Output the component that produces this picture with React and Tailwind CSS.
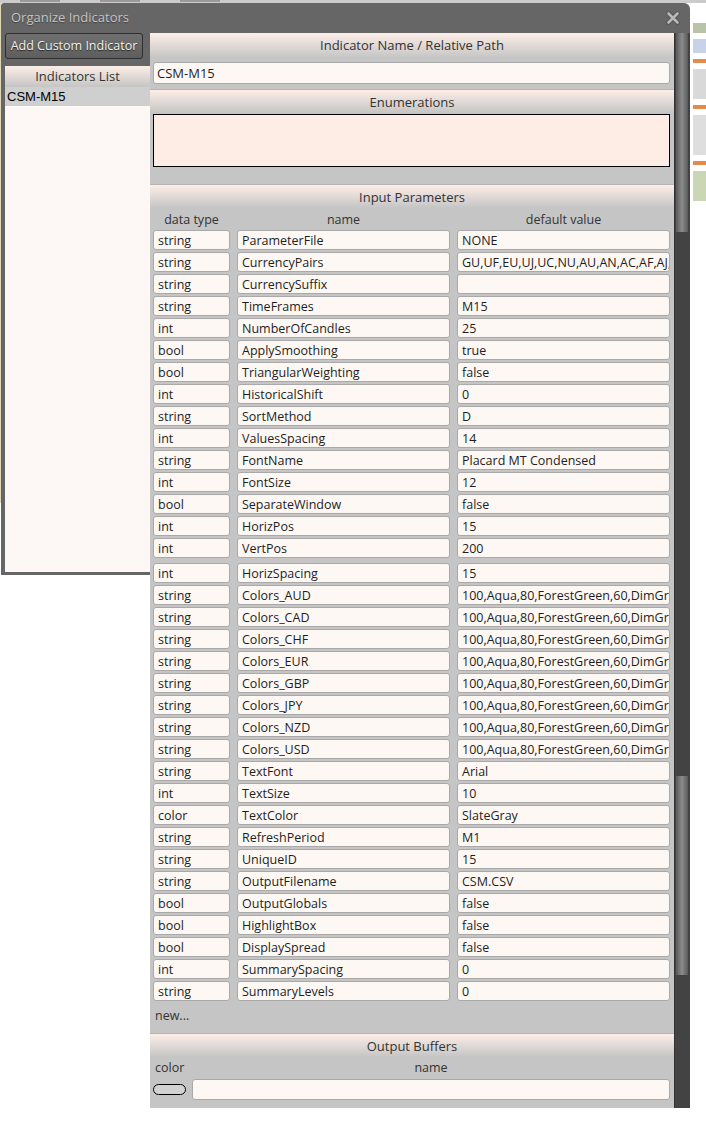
import React from "react";

const params = [
  ["string", "ParameterFile", "NONE"],
  ["string", "CurrencyPairs", "GU,UF,EU,UJ,UC,NU,AU,AN,AC,AF,AJ,NC,NF,NJ,CF,CJ,FJ,EG,EA,EN"],
  ["string", "CurrencySuffix", ""],
  ["string", "TimeFrames", "M15"],
  ["int", "NumberOfCandles", "25"],
  ["bool", "ApplySmoothing", "true"],
  ["bool", "TriangularWeighting", "false"],
  ["int", "HistoricalShift", "0"],
  ["string", "SortMethod", "D"],
  ["int", "ValuesSpacing", "14"],
  ["string", "FontName", "Placard MT Condensed"],
  ["int", "FontSize", "12"],
  ["bool", "SeparateWindow", "false"],
  ["int", "HorizPos", "15"],
  ["int", "VertPos", "200"],
  ["int", "HorizSpacing", "15"],
  ["string", "Colors_AUD", "100,Aqua,80,ForestGreen,60,DimGray,40,Orange,20,Red"],
  ["string", "Colors_CAD", "100,Aqua,80,ForestGreen,60,DimGray,40,Orange,20,Red"],
  ["string", "Colors_CHF", "100,Aqua,80,ForestGreen,60,DimGray,40,Orange,20,Red"],
  ["string", "Colors_EUR", "100,Aqua,80,ForestGreen,60,DimGray,40,Orange,20,Red"],
  ["string", "Colors_GBP", "100,Aqua,80,ForestGreen,60,DimGray,40,Orange,20,Red"],
  ["string", "Colors_JPY", "100,Aqua,80,ForestGreen,60,DimGray,40,Orange,20,Red"],
  ["string", "Colors_NZD", "100,Aqua,80,ForestGreen,60,DimGray,40,Orange,20,Red"],
  ["string", "Colors_USD", "100,Aqua,80,ForestGreen,60,DimGray,40,Orange,20,Red"],
  ["string", "TextFont", "Arial"],
  ["int", "TextSize", "10"],
  ["color", "TextColor", "SlateGray"],
  ["string", "RefreshPeriod", "M1"],
  ["string", "UniqueID", "15"],
  ["string", "OutputFilename", "CSM.CSV"],
  ["bool", "OutputGlobals", "false"],
  ["bool", "HighlightBox", "false"],
  ["bool", "DisplaySpread", "false"],
  ["int", "SummarySpacing", "0"],
  ["string", "SummaryLevels", "0"],
];

const Header = ({ children, tall }) => (
  <div
    className={`${tall ? "h-[25px] leading-[25px]" : "h-[24px] leading-[24px] border-t border-[#b4b4b4]"} bg-gradient-to-b from-[#fdeee7] to-[#c5c5c5] text-center text-[13px] text-[#333]`}
  >
    {children}
  </div>
);

const Cell = ({ w, children }) => (
  <div
    className={`${w} h-[20px] leading-[20px] bg-[#fdf8f4] border border-[#a9a9a9] rounded-[3px] px-[4px] text-[12.5px] text-[#1e1e1e] whitespace-nowrap overflow-hidden`}
  >
    {children}
  </div>
);

const CloseIcon = () => (
  <svg width="14" height="14" viewBox="0 0 14 14">
    <path d="M2.5 2.5 L11.5 11.5 M11.5 2.5 L2.5 11.5" stroke="#555" strokeWidth="4.6" strokeLinecap="round" />
    <path d="M2.5 2.5 L11.5 11.5 M11.5 2.5 L2.5 11.5" stroke="#b8b8b8" strokeWidth="2.6" strokeLinecap="round" />
  </svg>
);

export default function App() {
  return (
    <div className="min-h-[1122px] w-[706px] bg-white font-['Open_Sans',sans-serif]">
      {/* background app peeking out on top */}
      <div className="h-[3px] bg-[#cbcbcb] flex gap-[40px] pl-[20px]">
        <div className="w-[40px] h-[2px] bg-[#9a9a9a]" />
        <div className="w-[40px] h-[2px] bg-[#9a9a9a]" />
        <div className="w-[40px] h-[2px] bg-[#9a9a9a]" />
      </div>

      <div className="flex items-start">
        <div className="w-[1px] h-[500px] bg-[#e2d6b8]" />

        {/* dialog frame */}
        <div className="w-[689px] h-[572px] bg-[#666] rounded-tr-[6px] rounded-tl-[3px]">
          <div className="h-[30px] flex items-center justify-between pl-[10px] pr-[10px]">
            <span className="text-[13px] text-[#c4c4c4] [text-shadow:0_1px_1px_#444]">Organize Indicators</span>
            <CloseIcon />
          </div>

          <div className="flex items-start">
            {/* left column */}
            <div className="w-[149px] pl-[4px] flex flex-col">
              <button className="w-[138px] h-[26px] bg-gradient-to-b from-[#707070] to-[#5e5e5e] border border-[#2e2e2e] rounded-[3px] text-[12.5px] text-[#f2f2f2] [text-shadow:0_1px_1px_#222]">
                Add Custom Indicator
              </button>
              <div className="mt-[7px] w-[145px] h-[506px] bg-[#fdf8f5] flex flex-col">
                <div className="h-[21px] leading-[21px] bg-gradient-to-b from-[#fdeee7] to-[#c5c5c5] text-center text-[13px] text-[#333]">
                  Indicators List
                </div>
                <div className="h-[19px] leading-[19px] bg-[#cfcfcf] pl-[2px] text-[13px] text-black font-['Liberation_Sans',sans-serif]">
                  CSM-M15
                </div>
              </div>
            </div>

            {/* right column */}
            <div className="w-[540px] flex">
              <div className="w-[524px] bg-[#c5c5c5] flex flex-col">
                <Header tall>Indicator Name / Relative Path</Header>
                <div className="pt-[4px] pb-[5px] pl-[3px] pr-[4px]">
                  <div className="h-[22px] leading-[21px] bg-[#fdf8f4] border border-[#a9a9a9] rounded-[3px] px-[3px] text-[13px] text-[#1e1e1e]">
                    CSM-M15
                  </div>
                </div>

                <Header>Enumerations</Header>
                <div className="pt-[1px] pb-[17px] pl-[3px] pr-[4px]">
                  <div className="h-[53px] bg-[#feede5] border border-black" />
                </div>

                <Header>Input Parameters</Header>
                <div className="h-[22px] leading-[23px] flex gap-[7px] pl-[3px] pr-[4px] text-[12.5px] text-[#333] text-center">
                  <div className="w-[77px]">data type</div>
                  <div className="w-[213px]">name</div>
                  <div className="w-[213px]">default value</div>
                </div>
                <div className="flex flex-col gap-[2px] pl-[3px] pr-[4px]">
                  {params.map(([type, name, value]) => (
                    <div key={name} className={`flex gap-[7px] ${name === "HorizSpacing" ? "mt-[3px]" : ""}`}>
                      <Cell w="w-[77px]">{type}</Cell>
                      <Cell w="w-[213px]">{name}</Cell>
                      <Cell w="w-[213px]">{value}</Cell>
                    </div>
                  ))}
                </div>
                <div className="h-[32px] leading-[30px] pl-[5px] text-[12.5px] text-[#333]">new...</div>

                <Header>Output Buffers</Header>
                <div className="h-[22px] leading-[22px] flex pl-[5px] pr-[4px] text-[12.5px] text-[#333]">
                  <div className="w-[37px]">color</div>
                  <div className="flex-1 text-center">name</div>
                </div>
                <div className="flex items-center gap-[6px] pl-[3px] pr-[4px] pb-[8px]">
                  <div className="w-[33px] h-[11px] rounded-full border border-black bg-[#d2d2d2]" />
                  <div className="flex-1 h-[21px] bg-[#fdf8f4] border border-[#a9a9a9] rounded-[3px]" />
                </div>
              </div>

              {/* scrollbar */}
              <div className="w-[16px] bg-[#434343] border-l border-[#333] flex flex-col pl-[1px] pr-[2px]">
                <div className="h-[199px] bg-gradient-to-r from-[#5a5a5a] via-[#8c8c8c] to-[#5a5a5a]" />
                <div className="h-[544px]" />
                <div className="h-[199px] bg-gradient-to-r from-[#5a5a5a] via-[#8c8c8c] to-[#5a5a5a]" />
              </div>
            </div>
          </div>
        </div>

        {/* background app peeking out on the right */}
        <div className="w-[16px] h-[258px] pl-[3px] flex flex-col gap-[6px] pt-[20px]">
          <div className="h-[10px] bg-[#b9c3a8]" />
          <div className="h-[14px] bg-[#c8d2e8]" />
          <div className="h-[4px] bg-[#e58a4a]" />
          <div className="h-[30px] bg-[#d9d9d9]" />
          <div className="h-[4px] bg-[#e58a4a]" />
          <div className="h-[40px] bg-[#dedede]" />
          <div className="h-[4px] bg-[#e58a4a]" />
          <div className="h-[30px] bg-[#c9d7b5]" />
        </div>
      </div>
    </div>
  );
}
